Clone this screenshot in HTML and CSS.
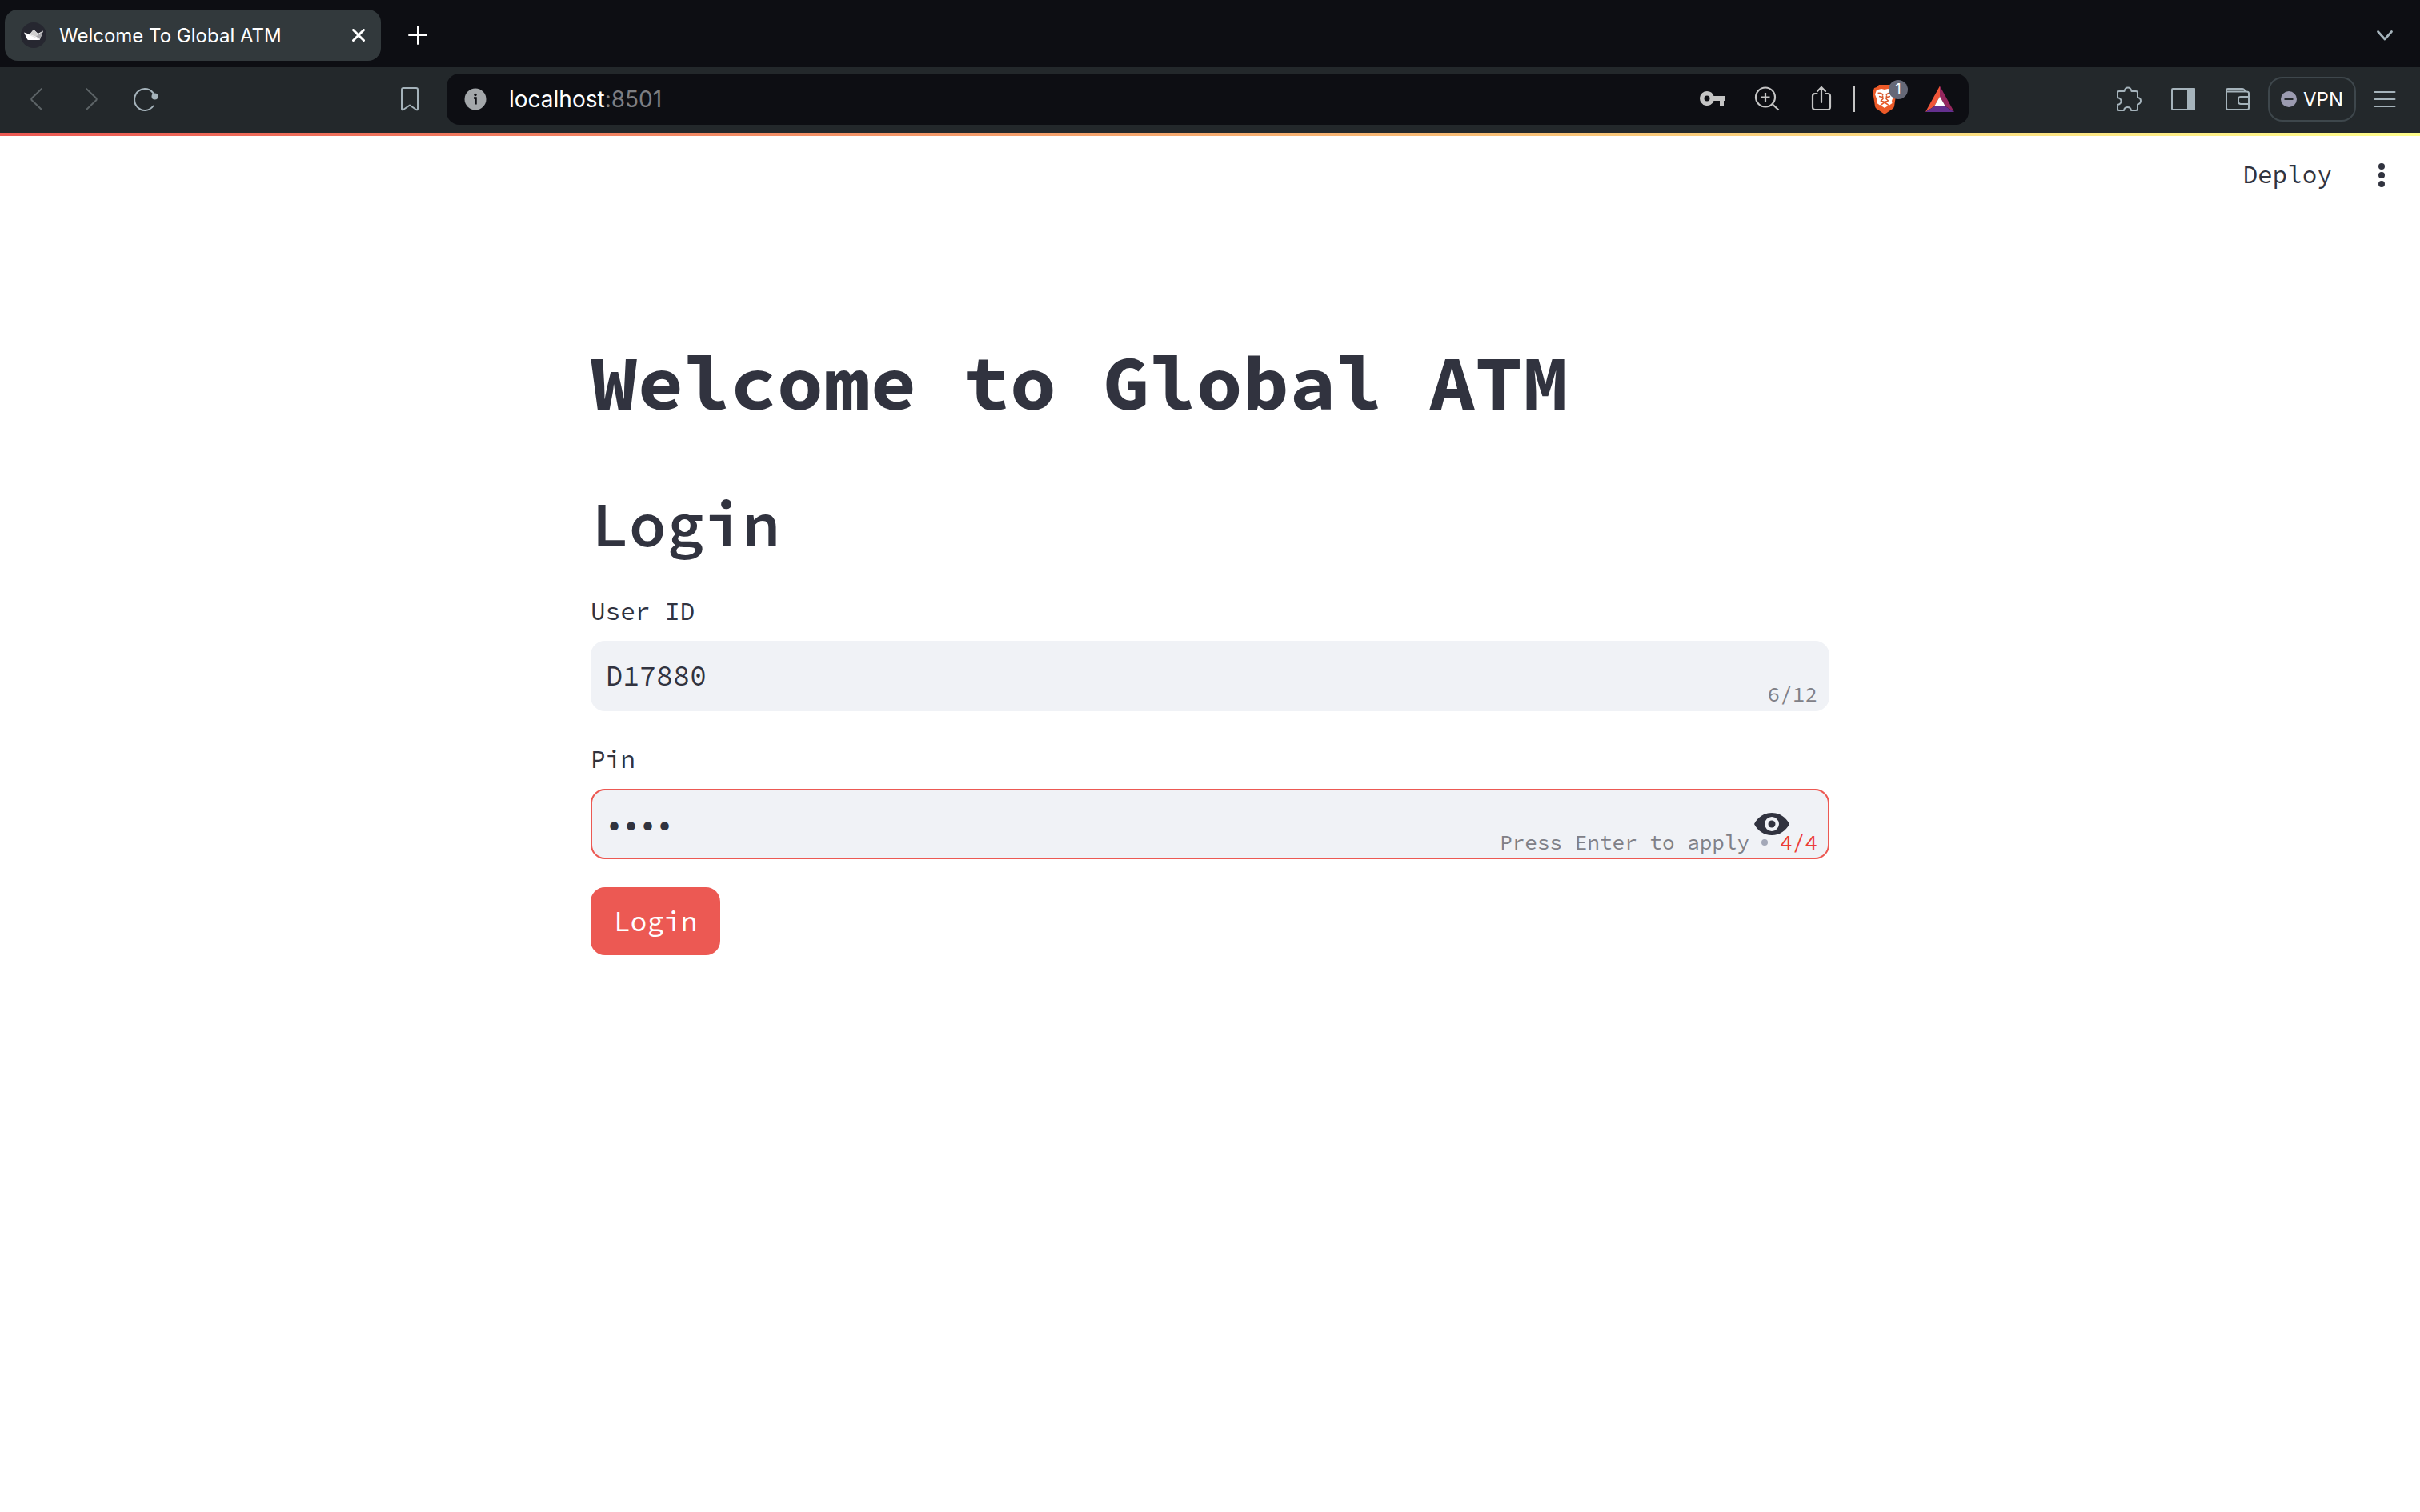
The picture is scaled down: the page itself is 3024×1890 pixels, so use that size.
FILE: index.html
```html
<!DOCTYPE html>
<html lang="en">
<head>
<meta charset="utf-8">
<title>Welcome To Global ATM</title>
<link rel="stylesheet" href="styles.css">
</head>
<body>
<header class="browser">
  <div class="tabstrip">
    <div class="tab">
      <svg class="favicon" viewBox="0 0 32 32"><circle cx="16" cy="16" r="16" fill="#262730"/><path d="M4 12.500l7 2.500 5-6 5.500 5L28 10.500l-4 10.500q-.5 1-1.500 1H9.500q-1 0-1.500-1z" fill="#fff"/><path d="M11 15l5-6 5.500 5-2 4z" fill="#d0d0d0"/><path d="M28 10.500l-4 10.500-5-3.500z" fill="#a8a8ac"/><path d="M10 15l14 6.500" stroke="#e4e4e4"/></svg>
      <span class="tab-title">Welcome To Global ATM</span>
      <button class="plain" aria-label="Close tab"><svg class="i16" viewBox="0 0 16 16"><path d="M1.500 1.500l13 13M14.500 1.500l-13 13" stroke="#fff" stroke-width="3" stroke-linecap="round"/></svg></button>
    </div>
    <button class="plain" aria-label="New tab"><svg class="i24" viewBox="0 0 24 24"><path d="M12 1v22M1 12h22" stroke="#fff" stroke-width="2" stroke-linecap="round"/></svg></button>
    <button class="plain tab-search" aria-label="Search tabs"><svg class="i24" viewBox="0 0 24 24"><path d="M3.500 7.500l8.500 9.500 8.500-9.500" fill="none" stroke="#a5b3bb" stroke-width="2.800" stroke-linecap="round" stroke-linejoin="round"/></svg></button>
  </div>
  <div class="toolbar">
    <nav class="nav-tools">
      <button class="plain" aria-label="Back"><svg class="i32 dim" viewBox="0 0 32 32"><path d="M22 3L10 14.500q-1.500 1.500 0 3L22 29"/></svg></button>
      <button class="plain" aria-label="Forward"><svg class="i32 dim" viewBox="0 0 32 32"><path d="M10 3l12 11.500q1.500 1.500 0 3L10 29"/></svg></button>
      <button class="plain" aria-label="Reload"><svg class="i32 line" viewBox="0 0 32 32"><path d="M26.500 10A13 13.500 0 1 0 25.500 24.500"/><circle cx="27.500" cy="12.500" r="4" fill="#a5b3bb" stroke="none"/></svg></button>
      <button class="plain bookmark" aria-label="Bookmark"><svg class="i32 line" viewBox="0 0 32 32"><path d="M8 2h16q2 0 2 2v24q0 2-2 1l-8-5.500L8 29q-2 1-2-1V4q0-2 2-2z"/></svg></button>
    </nav>
    <div class="address">
      <svg class="i32" viewBox="0 0 32 32"><circle cx="16" cy="16" r="13.500" fill="#a3a7aa"/><circle cx="16" cy="10.500" r="1.700" fill="#0d0e13"/><path d="M14 14.500h2.500v8" fill="none" stroke="#0d0e13" stroke-width="2.500"/></svg>
      <span class="url">localhost<span class="port">:8501</span></span>
      <div class="address-tools">
        <button class="plain" aria-label="Passwords"><svg class="i32" viewBox="0 0 32 32"><path fill="#c4c4c4" fill-rule="evenodd" d="M9 6a9 9 0 0 1 8.500 6H32v6h-2v6h-5v-6h-7.500A9 9 0 1 1 9 6zm0 5.500a3.500 3.500 0 1 0 0 7 3.500 3.500 0 0 0 0-7z"/></svg></button>
        <button class="plain" aria-label="Zoom"><svg class="i32" viewBox="0 0 32 32" fill="none" stroke="#c4c4c4" stroke-width="2.200"><circle cx="14" cy="13.500" r="12"/><path d="M14 8v11M8.500 13.500h11M22.500 22l8 7.500"/></svg></button>
        <button class="plain" aria-label="Share"><svg class="i32" viewBox="0 0 32 32" fill="none" stroke="#c4c4c4" stroke-width="2.200" stroke-linecap="round" stroke-linejoin="round"><path d="M10.500 9H8q-3 0-3 3v14q0 3 3 3h16q3 0 3-3V12q0-3-3-3h-2.500M16 20V1M11 6l5-5 5 5"/></svg></button>
        <span class="divider"></span>
        <button class="plain shield" aria-label="Brave Shields"><svg class="shield-icon" viewBox="0 0 30 36"><path d="M8 0h14l3 3 4 1 1 6-1 4-2 13q-.5 2-2 3l-8 5.500q-2 1-4 0L5 30q-1.500-1-2-3L1 14l-1-4L2 4l3-1z" fill="#ec5a28"/><path d="M5 6.500l6-1.500 4 1 4-1 6 1.500 2 5.500-3 8 .5 3-3.500 2.500-3.500-3L15 21l-2.500 1.500-3.500 3L5.500 23l.5-3-3-8z" fill="#fff"/><path d="M6.500 10.500q3-.5 5.500 1l1 1.500M23.500 10.500q-3-.5-5.500 1L17 13M8 14.500l4 1M22 14.500l-4 1M12.500 13.500l.5 4-2.500 2.500 4.500 1.500 4.500-1.500-2.500-2.500.5-4" fill="none" stroke="#d9572b" stroke-width="1.500"/><path d="M10.500 26l4.500-3 4.500 3-4.500 3z" fill="#fff"/></svg><span class="badge">1</span></button>
        <button class="plain" aria-label="Brave Rewards"><svg class="i36" viewBox="0 0 36 36"><path d="M18 1.500L0 34l11-7 7-12.500z" fill="#f0563a"/><path d="M18 1.500L36 34l-11-7-7-12.500z" fill="#95275e"/><path d="M0 34h36l-11-7H11z" fill="#64308f"/><path d="M18 14.500L11 27h14z" fill="#fff"/></svg></button>
      </div>
    </div>
    <div class="extensions">
      <button class="plain" aria-label="Extensions"><svg class="i32 line" viewBox="0 0 32 32"><path d="M4 6h6.500Q11.500 1.500 15 1.500T19.500 6H25q2 0 2 2v6q4 .5 4 4t-4 4.500V28q0 2-2 2h-6q-.5-4-4.500-4T10 30H4q-2 0-2-2v-5q4.500-1 4.500-4.500T2 14V8q0-2 2-2z"/></svg></button>
      <button class="plain" aria-label="Sidebar"><svg class="i32 line" viewBox="0 0 32 32"><rect x="2" y="3" width="28" height="26" rx="1"/><path d="M22 3h8v26h-8z" fill="#a5b3bb"/></svg></button>
      <button class="plain" aria-label="Wallet"><svg class="i32 line" viewBox="0 0 32 32"><path d="M3 6.500h24q3 0 3 2V27q0 2-2 2H4q-2 0-2-2V5q0-2 2-2h18q2 0 4 3.500M30 13H20q-3 0-3 3v3q0 3 3 3h10"/></svg></button>
      <button class="vpn"><svg class="i20" viewBox="0 0 20 20"><circle cx="10" cy="10" r="10" fill="#9b9bb0"/><path d="M4.500 10h11" stroke="#23282b" stroke-width="2"/></svg>VPN</button>
      <button class="plain" aria-label="Menu"><svg class="i32 line" viewBox="0 0 32 32"><path d="M3.500 7h25M3.500 16h25M3.500 25h25"/></svg></button>
    </div>
  </div>
</header>
<div class="rainbow"></div>
<div class="app-bar">
  <button class="deploy">Deploy</button>
  <button class="plain" aria-label="App menu"><svg class="i32" viewBox="0 0 32 32" fill="#31333f"><circle cx="16" cy="5" r="4"/><circle cx="16" cy="16" r="4"/><circle cx="16" cy="27" r="4"/></svg></button>
</div>
<main class="content">
  <h1>Welcome to Global ATM</h1>
  <h2>Login</h2>
  <form class="login">
    <div class="field">
      <label for="user">User ID</label>
      <div class="box">
        <input id="user" type="text" maxlength="12" value="D17880">
        <div class="hint">6/12</div>
      </div>
    </div>
    <div class="field">
      <label for="pin">Pin</label>
      <div class="box active">
        <input id="pin" type="password" maxlength="4" value="1234">
        <button type="button" class="plain eye" aria-label="Show pin"><svg class="eye-icon" viewBox="0 0 44 28"><path fill="#31333f" fill-rule="evenodd" d="M22 0c10 0 18 6 22 14-4 8-12 14-22 14S4 22 0 14C4 6 12 0 22 0zm0 5a9 9 0 1 0 0 18 9 9 0 0 0 0-18z"/><circle cx="22" cy="14" r="4.500" fill="#31333f"/></svg></button>
        <div class="hint">Press Enter to apply<span class="dot"></span><span class="limit">4/4</span></div>
      </div>
    </div>
    <button type="button" class="submit">Login</button>
  </form>
</main>
</body>
</html>
```
FILE: styles.css
```css
* { box-sizing: border-box; }

body {
  margin: 0;
  background: #fff;
  color: #31333f;
  font-family: "Source Code Pro", "Liberation Mono", monospace;
}

button { font-family: inherit; color: inherit; cursor: pointer; }
svg { display: block; }

.plain { padding: 0; border: 0; background: none; }
.i16 { width: 16px; height: 16px; }
.i20 { width: 20px; height: 20px; }
.i24 { width: 24px; height: 24px; }
.i32 { width: 32px; height: 32px; }
.i36 { width: 36px; height: 36px; }
.line, .dim {
  fill: none;
  stroke: #a5b3bb;
  stroke-width: 2;
  stroke-linecap: round;
  stroke-linejoin: round;
}
.dim { stroke: #5c6366; }

.browser { font-family: Inter, sans-serif; color: #fff; }

.tabstrip {
  display: flex;
  align-items: center;
  gap: 34px;
  height: 84px;
  padding: 4px 32px 0 6px;
  background: #0d0e13;
}
.tab {
  display: flex;
  align-items: center;
  gap: 16px;
  width: 470px;
  height: 64px;
  padding: 0 20px;
  border-radius: 16px;
  background: #32393c;
}
.favicon { width: 32px; height: 32px; }
.tab-title { flex: 1; font-size: 24px; }
.tab-search { margin-left: auto; }

.toolbar {
  display: flex;
  align-items: center;
  height: 82px;
  padding: 0 28px 2px 30px;
  background: #23282b;
}
.nav-tools {
  display: flex;
  gap: 36px;
  width: 528px;
  padding-right: 30px;
}
.bookmark { margin-left: auto; }
.address {
  display: flex;
  flex: 1;
  align-items: center;
  gap: 26px;
  height: 64px;
  padding: 0 18px 0 20px;
  border-radius: 16px;
  background: #0d0e13;
}
.url { flex: 1; font-size: 28px; }
.port { color: #7d7e82; }
.address-tools { display: flex; align-items: center; gap: 36px; }
.divider { width: 2px; height: 32px; margin: 0 -14px 0 -12px; background: #c4c4c4; }
.shield { position: relative; }
.shield-icon { width: 30px; height: 36px; }
.badge {
  position: absolute;
  top: -6px;
  left: 20px;
  width: 24px;
  height: 24px;
  border-radius: 12px;
  background: #656877;
  color: #fff;
  font-size: 18px;
  line-height: 24px;
}
.extensions {
  display: flex;
  align-items: center;
  justify-content: flex-end;
  gap: 36px;
  width: 536px;
}
.vpn {
  display: flex;
  align-items: center;
  justify-content: center;
  gap: 8px;
  width: 110px;
  height: 56px;
  margin: 0 -16px 0 -14px;
  padding: 0;
  border: 2px solid #3e474c;
  border-radius: 18px;
  background: none;
  font-size: 24px;
}

.rainbow { height: 4px; background: linear-gradient(90deg, #ec5953, #fffd8c); }

.app-bar {
  display: flex;
  align-items: center;
  justify-content: flex-end;
  gap: 46px;
  height: 98px;
  padding: 0 32px;
}
.deploy { padding: 0 0 3px; border: 0; background: none; font-size: 31px; }

.content {
  max-width: 1548px;
  margin: 0 auto;
  padding: 152px 0;
}
h1 {
  margin: 0;
  font-size: 97px;
  font-weight: 700;
  line-height: 116px;
}
h2 {
  margin: 71px 0 0;
  font-size: 79px;
  font-weight: 600;
  line-height: 96px;
}
.login { display: flex; flex-direction: column; align-items: flex-start; gap: 35px; padding-top: 36px; }
.field { width: 100%; }
.field label { display: block; padding-bottom: 12px; font-size: 31px; line-height: 50px; }
.box {
  position: relative;
  display: flex;
  align-items: center;
  height: 88px;
  border: 2px solid #f0f2f6;
  border-radius: 18px;
  background: #f0f2f6;
}
.active { border-color: #ec5953; }
.box input {
  flex: 1;
  min-width: 0;
  height: 100%;
  padding: 0 17px;
  border: 0;
  outline: 0;
  background: none;
  color: inherit;
  font-family: inherit;
  font-size: 35px;
}
.eye { padding-right: 48px; }
.eye-icon { width: 44px; height: 28px; }
.hint {
  position: absolute;
  right: 13px;
  bottom: 2px;
  display: flex;
  align-items: center;
  color: #7f8087;
  font-size: 26px;
  line-height: 34px;
}
.dot { width: 8px; height: 8px; margin: 0 15px; border-radius: 4px; background: #a3a8b8; }
.limit { color: #ec3d36; }
.submit {
  width: 162px;
  height: 85px;
  padding: 0;
  border: 0;
  border-radius: 18px;
  background: #ec5953;
  color: #fff;
  font-size: 35px;
}
```
